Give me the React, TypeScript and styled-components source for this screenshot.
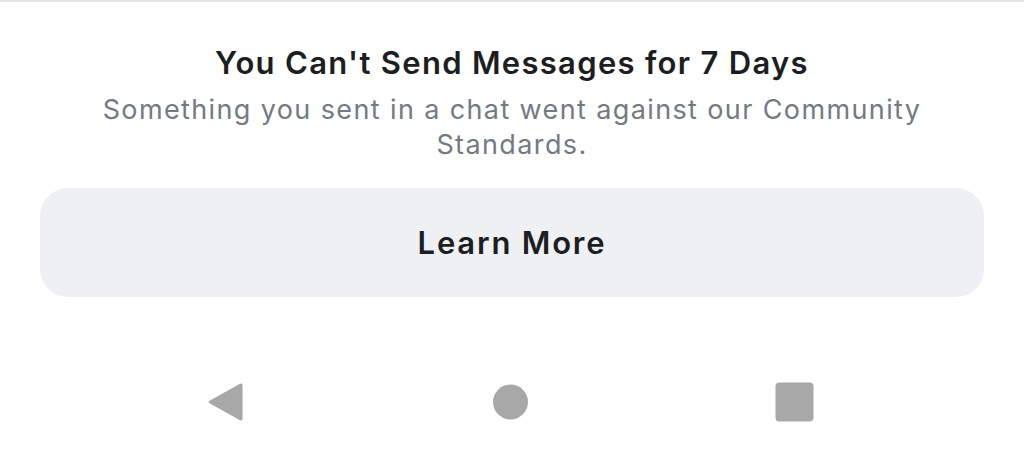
import React from "react";
import styled, { createGlobalStyle } from "styled-components";

const Global = createGlobalStyle`
  html, body { margin: 0; padding: 0; background: #ffffff; }
  body { font-family: Inter, "Noto Sans", sans-serif; }
`;

const Page = styled.div`
  width: 1024px;
  height: 462px;
  box-sizing: border-box;
  border-top: 2px solid #e5e5e5;
  display: flex;
  flex-direction: column;
  align-items: center;
`;

const Title = styled.h1`
  margin: 42px 0 0;
  font-size: 31px;
  line-height: 38px;
  font-weight: 600;
  color: #1c1e21;
  text-align: center;
  letter-spacing: 1.3px;
`;

const Subtitle = styled.p`
  margin: 10px 0 0;
  width: 860px;
  font-size: 27px;
  line-height: 35px;
  font-weight: 400;
  color: #737a84;
  text-align: center;
  letter-spacing: 1.38px;
`;

const Button = styled.button`
  margin-top: 26px;
  width: 944px;
  height: 109px;
  border: none;
  border-radius: 28px;
  background: #eff0f4;
  font-family: inherit;
  font-size: 31px;
  font-weight: 600;
  letter-spacing: 1.8px;
  color: #1c1e21;
  cursor: pointer;
`;

const NavBar = styled.nav`
  margin-top: 85px;
  width: 100%;
  display: flex;
  gap: 245px;
  padding-left: 205px;
  box-sizing: border-box;
`;

const NavIcon = styled.svg`
  width: 40px;
  height: 40px;
  fill: #a8a8a8;
`;

export default function App() {
  return (
    <>
      <Global />
      <Page>
        <Title>You Can't Send Messages for 7 Days</Title>
        <Subtitle>
          Something you sent in a chat went against our Community Standards.
        </Subtitle>
        <Button>Learn More</Button>
        <NavBar>
          <NavIcon viewBox="0 0 40 40">
            <path d="M35 1.8 Q37.5 0.8 37.5 3.5 L37.5 36.5 Q37.5 39.2 35 38.2 L4.5 21.3 Q2.8 20 4.5 18.7 Z" />
          </NavIcon>
          <NavIcon viewBox="0 0 40 40">
            <circle cx="20.5" cy="20" r="17.5" />
          </NavIcon>
          <NavIcon viewBox="0 0 40 40">
            <rect x="0.5" y="0.5" width="38" height="39" rx="4" />
          </NavIcon>
        </NavBar>
      </Page>
    </>
  );
}
